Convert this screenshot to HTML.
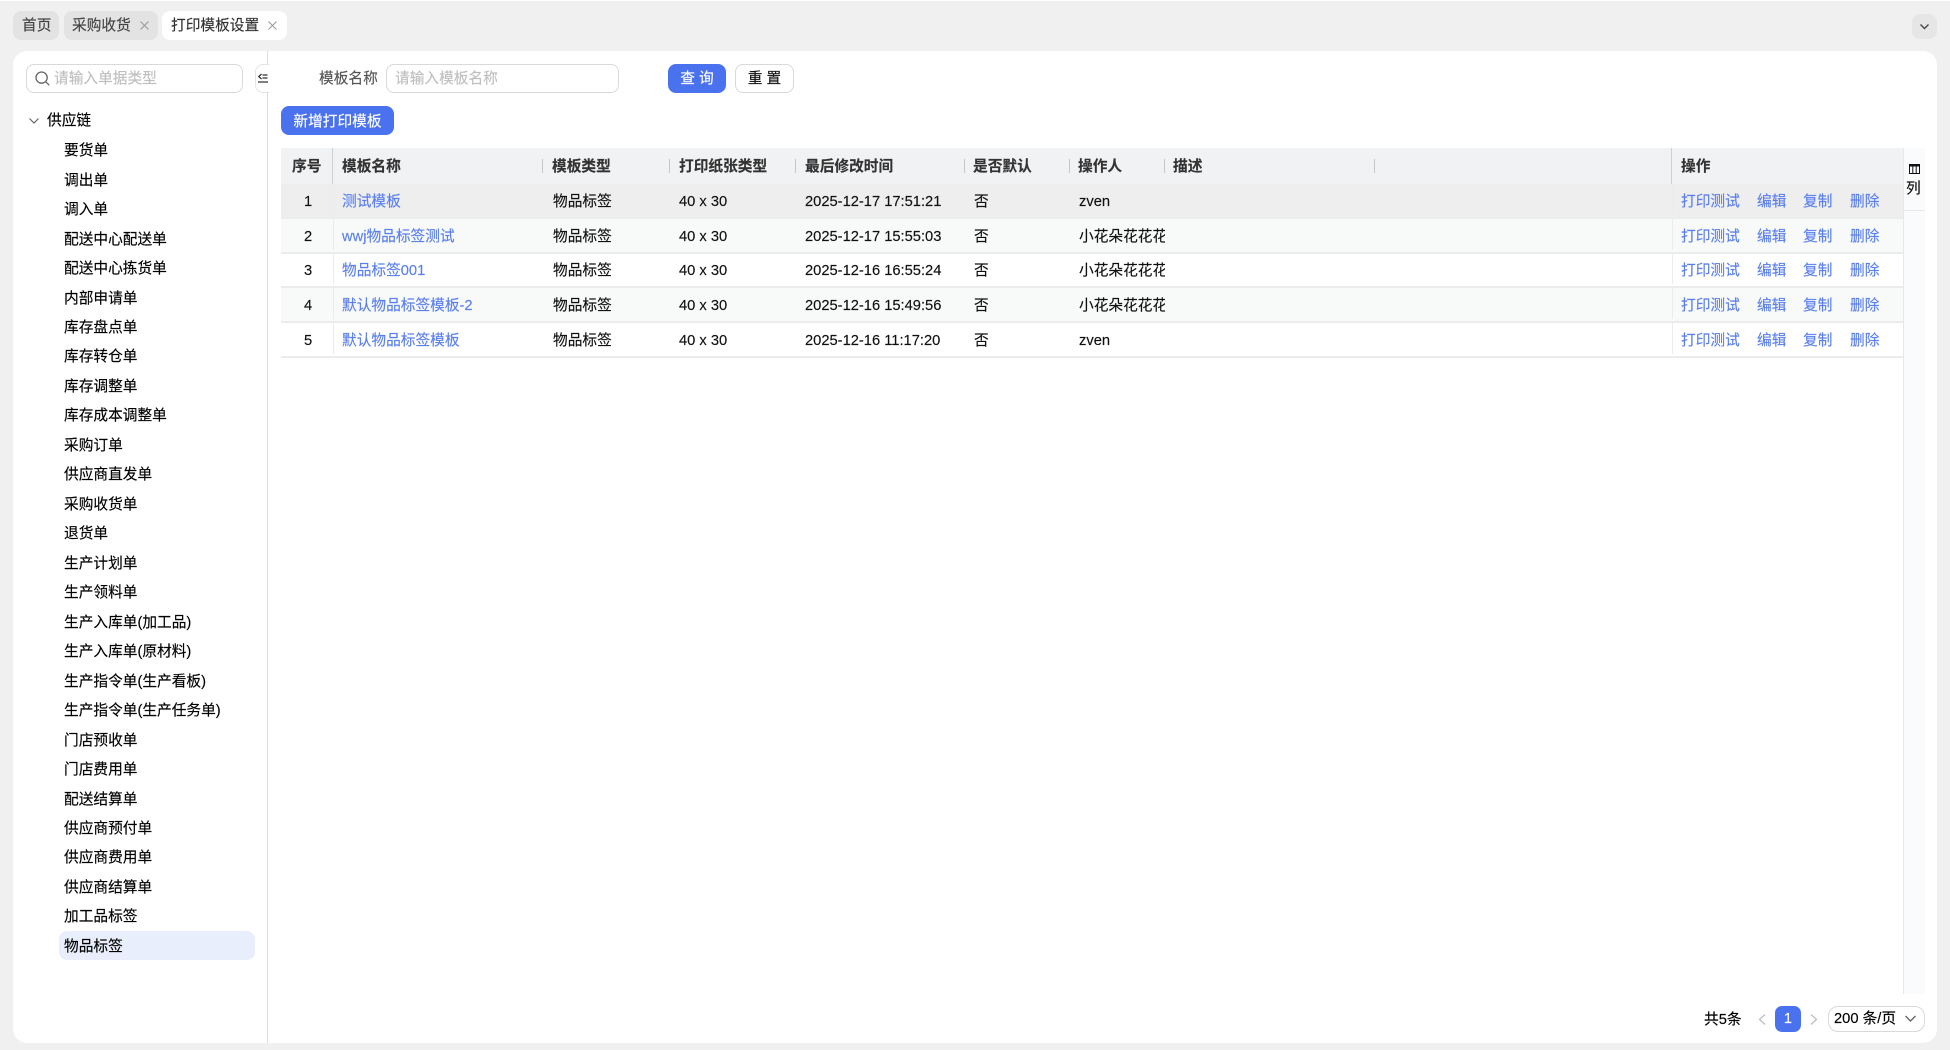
<!DOCTYPE html>
<html lang="zh"><head><meta charset="utf-8"><title>打印模板设置</title>
<style>
*{box-sizing:border-box}
html,body{margin:0;padding:0;width:1950px;height:1050px;overflow:hidden;background:#f0f0f1;font:14.7px/20px "Liberation Sans","Noto Sans CJK SC",sans-serif;color:#111;-webkit-text-stroke:.15px}
.a,.c{position:absolute}
.c{white-space:nowrap}
.tab{position:absolute;top:11px;height:29px;line-height:31px;border-radius:8px;background:#e3e3e3;color:#444;padding-left:9px}
.x{position:absolute;top:9px;width:11px;height:11px}
.card{position:absolute;left:13px;top:51px;width:1924px;height:992px;background:#fff;border-radius:14px}
.inp{position:absolute;height:29px;line-height:29px;border:1px solid #d9d9d9;border-radius:8px;background:#fff;color:#bfbfbf}
.btn{position:absolute;height:29px;line-height:31px;text-align:center;border-radius:8px;background:#4a72ee;color:#fff}
.tree{position:absolute;left:64px;top:137.2px;width:190px}
.tree div{height:29.48px;line-height:29.48px;white-space:nowrap;color:#000}
.hl{position:absolute;left:59px;top:931px;width:196px;height:29px;background:#e8eefb;border-radius:8px}
.row{position:absolute;left:281px;width:1622px;height:35px;border-bottom:2px solid #ececec}
.row .c{top:8px;line-height:20px}
.row .c.l,.l{color:#5b7fee}
.th{position:absolute;top:157px;line-height:20px;font-weight:600;color:#333;white-space:nowrap}
.sep{position:absolute;top:159px;width:1px;height:14px;background:#c4c7cc}
.vb{position:absolute;top:0;bottom:2px;width:1px;background:#ececec}
</style></head><body>
<div class="a" style="left:0;top:0;width:1950px;height:1px;background:#fff"></div>

<div class="tab" style="left:13px;width:46px">首页</div>
<div class="tab" style="left:64px;width:94px;padding-left:8px">采购收货<svg class="x" style="left:75px" viewBox="0 0 11 11"><path d="M1.5 1.5l8 8M9.5 1.5l-8 8" stroke="#999" stroke-width="1" fill="none"/></svg></div>
<div class="tab" style="left:162px;width:125px;background:#fff;color:#333">打印模板设置<svg class="x" style="left:105px" viewBox="0 0 11 11"><path d="M1.5 1.5l8 8M9.5 1.5l-8 8" stroke="#999" stroke-width="1" fill="none"/></svg></div>
<div class="a" style="left:1912px;top:14px;width:25px;height:25px;border-radius:8px;background:#e6e6e6"><svg class="a" style="left:7px;top:8px" width="11" height="9" viewBox="0 0 11 9"><path d="M1.5 2.5l4 4 4-4" stroke="#444" stroke-width="1.4" fill="none"/></svg></div>

<div class="card"></div>

<div class="inp" style="left:26px;top:64px;width:217px;padding-left:27px">请输入单据类型</div>
<svg class="a" style="left:34px;top:70px" width="17" height="17" viewBox="0 0 17 17"><circle cx="7.6" cy="7.6" r="5.6" stroke="#666" stroke-width="1.3" fill="none"/><path d="M11.8 11.8l3.4 3.4" stroke="#666" stroke-width="1.3"/></svg>

<div class="a" style="left:267px;top:51px;width:1px;height:992px;background:#dcdcdc"></div>
<div class="a" style="left:255px;top:64px;width:14px;height:29px;background:#fff;border:1px solid #e4e4e4;border-right:0;border-radius:8px 0 0 8px"></div>
<svg class="a" style="left:258px;top:73px" width="10" height="11" viewBox="0 0 10 11"><path d="M3.5 1L.8 3.5 3.5 6" stroke="#333" stroke-width="1.3" fill="none"/><path d="M4.5 2h5M4.5 5h5M0 9h10" stroke="#333" stroke-width="1.2"/></svg>

<svg class="a" style="left:28px;top:116px" width="12" height="10" viewBox="0 0 12 10"><path d="M1.5 2.5L6 7l4.5-4.5" stroke="#666" stroke-width="1.2" fill="none"/></svg>
<div class="c" style="left:47px;top:111px;line-height:21px;color:#000">供应链</div>
<div class="hl"></div>
<div class="tree">
<div>要货单</div><div>调出单</div><div>调入单</div><div>配送中心配送单</div><div>配送中心拣货单</div><div>内部申请单</div><div>库存盘点单</div><div>库存转仓单</div><div>库存调整单</div><div>库存成本调整单</div><div>采购订单</div><div>供应商直发单</div><div>采购收货单</div><div>退货单</div><div>生产计划单</div><div>生产领料单</div><div>生产入库单(加工品)</div><div>生产入库单(原材料)</div><div>生产指令单(生产看板)</div><div>生产指令单(生产任务单)</div><div>门店预收单</div><div>门店费用单</div><div>配送结算单</div><div>供应商预付单</div><div>供应商费用单</div><div>供应商结算单</div><div>加工品标签</div><div>物品标签</div>
</div>

<div class="c" style="left:319px;top:69px;color:#555">模板名称</div>
<div class="inp" style="left:386px;top:64px;width:233px;padding-left:8px">请输入模板名称</div>
<div class="btn" style="left:668px;top:64px;width:58px">查 询</div>
<div class="btn" style="left:735px;top:64px;width:59px;background:#fff;color:#111;border:1px solid #d9d9d9;line-height:29px">重 置</div>
<div class="btn" style="left:281px;top:106px;width:113px;line-height:32px">新增打印模板</div>

<div class="a" style="left:281px;top:148px;width:1622px;height:36px;background:#f1f2f4"></div>
<div class="a" style="left:332px;top:148px;width:1px;height:36px;background:#cdd0d5"></div>
<div class="a" style="left:1671px;top:148px;width:1px;height:36px;background:#cdd0d5"></div>
<div class="sep" style="left:542px"></div><div class="sep" style="left:669px"></div><div class="sep" style="left:795px"></div><div class="sep" style="left:964px"></div><div class="sep" style="left:1069px"></div><div class="sep" style="left:1164px"></div><div class="sep" style="left:1374px"></div>
<div class="th" style="left:292px">序号</div>
<div class="th" style="left:342px">模板名称</div>
<div class="th" style="left:552px">模板类型</div>
<div class="th" style="left:679px">打印纸张类型</div>
<div class="th" style="left:805px">最后修改时间</div>
<div class="th" style="left:973px">是否默认</div>
<div class="th" style="left:1078px">操作人</div>
<div class="th" style="left:1173px">描述</div>
<div class="th" style="left:1681px">操作</div>

<div class="row" style="top:184px;background:#eeeeef">
<span class="vb" style="left:52px"></span><span class="vb" style="left:1391px"></span>
<span class="c" style="left:23px">1</span><span class="c l" style="left:61px">测试模板</span><span class="c" style="left:272px">物品标签</span><span class="c" style="left:398px">40 x 30</span><span class="c" style="left:524px">2025-12-17 17:51:21</span><span class="c" style="left:693px">否</span><span class="c" style="left:798px">zven</span>
<span class="c l" style="left:1400px">打印测试</span><span class="c l" style="left:1476px">编辑</span><span class="c l" style="left:1522px">复制</span><span class="c l" style="left:1569px">删除</span></div>

<div class="row" style="top:219px;background:#f8fafa">
<span class="vb" style="left:52px"></span><span class="vb" style="left:1391px"></span>
<span class="c" style="left:23px">2</span><span class="c l" style="left:61px">wwj物品标签测试</span><span class="c" style="left:272px">物品标签</span><span class="c" style="left:398px">40 x 30</span><span class="c" style="left:524px">2025-12-17 15:55:03</span><span class="c" style="left:693px">否</span><span class="c" style="left:798px;width:86px;overflow:hidden">小花朵花花花</span>
<span class="c l" style="left:1400px">打印测试</span><span class="c l" style="left:1476px">编辑</span><span class="c l" style="left:1522px">复制</span><span class="c l" style="left:1569px">删除</span></div>

<div class="row" style="top:253px">
<span class="vb" style="left:52px"></span><span class="vb" style="left:1391px"></span>
<span class="c" style="left:23px">3</span><span class="c l" style="left:61px">物品标签001</span><span class="c" style="left:272px">物品标签</span><span class="c" style="left:398px">40 x 30</span><span class="c" style="left:524px">2025-12-16 16:55:24</span><span class="c" style="left:693px">否</span><span class="c" style="left:798px;width:86px;overflow:hidden">小花朵花花花</span>
<span class="c l" style="left:1400px">打印测试</span><span class="c l" style="left:1476px">编辑</span><span class="c l" style="left:1522px">复制</span><span class="c l" style="left:1569px">删除</span></div>

<div class="row" style="top:288px;background:#f8fafa">
<span class="vb" style="left:52px"></span><span class="vb" style="left:1391px"></span>
<span class="c" style="left:23px">4</span><span class="c l" style="left:61px">默认物品标签模板-2</span><span class="c" style="left:272px">物品标签</span><span class="c" style="left:398px">40 x 30</span><span class="c" style="left:524px">2025-12-16 15:49:56</span><span class="c" style="left:693px">否</span><span class="c" style="left:798px;width:86px;overflow:hidden">小花朵花花花</span>
<span class="c l" style="left:1400px">打印测试</span><span class="c l" style="left:1476px">编辑</span><span class="c l" style="left:1522px">复制</span><span class="c l" style="left:1569px">删除</span></div>

<div class="row" style="top:323px">
<span class="vb" style="left:52px"></span><span class="vb" style="left:1391px"></span>
<span class="c" style="left:23px">5</span><span class="c l" style="left:61px">默认物品标签模板</span><span class="c" style="left:272px">物品标签</span><span class="c" style="left:398px">40 x 30</span><span class="c" style="left:524px">2025-12-16 11:17:20</span><span class="c" style="left:693px">否</span><span class="c" style="left:798px">zven</span>
<span class="c l" style="left:1400px">打印测试</span><span class="c l" style="left:1476px">编辑</span><span class="c l" style="left:1522px">复制</span><span class="c l" style="left:1569px">删除</span></div>

<div class="a" style="left:1903px;top:148px;width:22px;height:846px;background:#fafbfd;border-left:1px solid #e8e8e8"></div>
<div class="a" style="left:1904px;top:210px;width:21px;height:1px;background:#e8e8e8"></div>
<svg class="a" style="left:1909px;top:164px" width="11" height="10" viewBox="0 0 11 10"><path d="M.5.5h10v9H.5z" fill="#fff" stroke="#111"/><path d="M0 .5h11v2H0z" fill="#111"/><path d="M3.8 2v7.5M7.2 2v7.5" stroke="#111"/></svg>
<div class="c" style="left:1906px;top:179px;color:#111">列</div>

<div class="c" style="left:1704px;top:1010px;color:#000">共5条</div>
<svg class="a" style="left:1757px;top:1013px" width="10" height="13" viewBox="0 0 10 13"><path d="M8 1.5L2.5 6.5 8 11.5" stroke="#bbb" stroke-width="1.2" fill="none"/></svg>
<div class="btn" style="left:1775px;top:1006px;width:26px;height:26px;line-height:27px;border-radius:7px">1</div>
<svg class="a" style="left:1809px;top:1013px" width="10" height="13" viewBox="0 0 10 13"><path d="M2 1.5L7.5 6.5 2 11.5" stroke="#bbb" stroke-width="1.2" fill="none"/></svg>
<div class="a" style="left:1828px;top:1006px;width:97px;height:26px;border:1px solid #d9d9d9;border-radius:10px;background:#fff;line-height:25px;padding-left:5px;color:#000;white-space:nowrap">200 条/页</div>
<svg class="a" style="left:1904px;top:1014px" width="13" height="10" viewBox="0 0 13 10"><path d="M1.5 2l5 5 5-5" stroke="#666" stroke-width="1.4" fill="none"/></svg>
</body></html>
